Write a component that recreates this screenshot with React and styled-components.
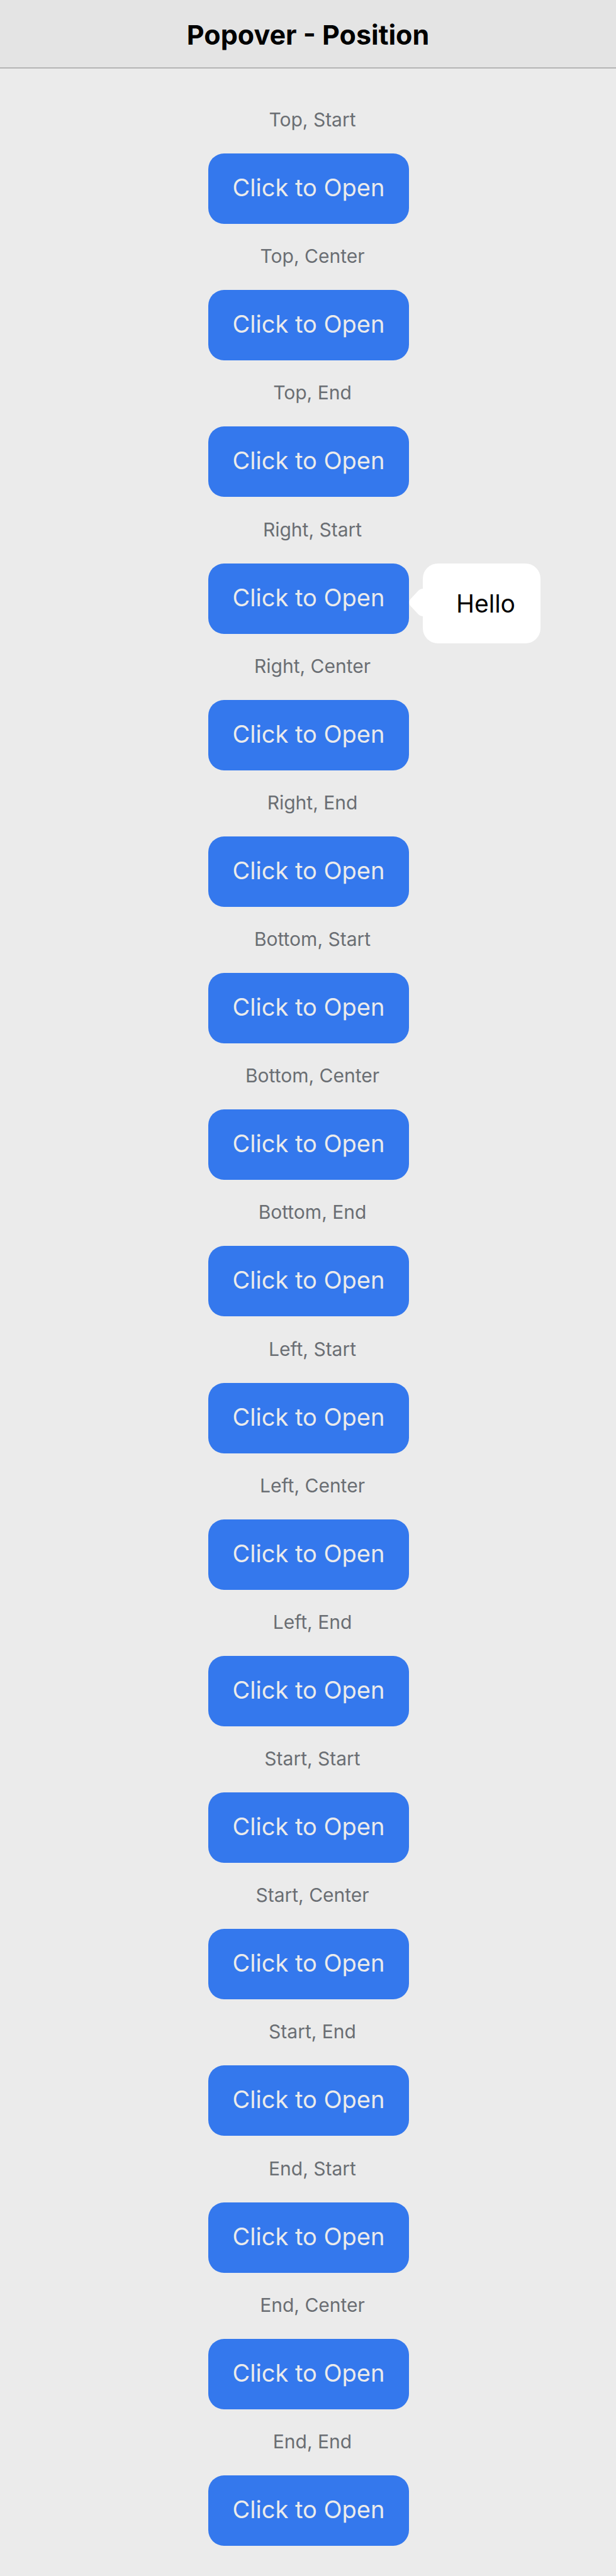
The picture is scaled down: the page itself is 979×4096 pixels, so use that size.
import React from "react";
import styled, { createGlobalStyle } from "styled-components";

const GlobalStyle = createGlobalStyle`
  *, *::before, *::after { box-sizing: border-box; }
  body {
    margin: 0;
    background: #ebebeb;
    font-family: Inter, "Liberation Sans", sans-serif;
  }
`;

const Page = styled.div`
  display: flex;
  flex-direction: column;
  min-height: 100vh;
`;

const Header = styled.header`
  display: flex;
  align-items: center;
  justify-content: center;
  height: 109px;
  padding-top: 2px;
  background: #e4e4e4;
  border-bottom: 2px solid #b5b5b5;
`;

const Title = styled.h1`
  margin: 0;
  font-size: 43px;
  line-height: 48px;
  font-weight: 700;
  color: #000;
`;

const Content = styled.main`
  flex: 1;
  display: flex;
  flex-direction: column;
  align-items: center;
  justify-content: space-between;
  padding: 62px 0 48px 2px;
`;

const Example = styled.section`
  display: flex;
  flex-direction: column;
  align-items: center;
  gap: 35px;
`;

const Label = styled.h2`
  margin: 0;
  padding-left: 12px;
  font-size: 30px;
  line-height: 38px;
  font-weight: 400;
  color: #6a6e73;
`;

const Anchor = styled.div`
  position: relative;
`;

const OpenButton = styled.button`
  display: block;
  width: 319px;
  height: 112px;
  padding: 0 0 4px;
  border: 0;
  border-radius: 25px;
  background: #3478ed;
  color: #ebebeb;
  font-family: inherit;
  font-size: 38px;
  font-weight: 400;
  white-space: nowrap;
  cursor: pointer;
`;

const PopoverBox = styled.div`
  position: absolute;
  top: 0;
  left: calc(100% + 22px);
  padding: 40px 40px 40px 53px;
  border-radius: 24px;
  background: #fff;
  color: #000;
  font-size: 39px;
  line-height: 47px;
`;

const Arrow = styled.svg`
  position: absolute;
  top: 40px;
  right: 100%;
  width: 22px;
  height: 44px;
  fill: #fff;
`;

function Popover({ children }) {
  return (
    <PopoverBox role="dialog">
      <Arrow viewBox="0 0 22 44" aria-hidden="true">
        <path d="M22 0Q18 0 15 3L2 17Q-1 22 2 27L15 41Q18 44 22 44Z" />
      </Arrow>
      {children}
    </PopoverBox>
  );
}

const sides = ["Top", "Right", "Bottom", "Left", "Start", "End"];
const alignments = ["Start", "Center", "End"];
const positions = sides.flatMap((side) =>
  alignments.map((alignment) => `${side}, ${alignment}`)
);

export default function App() {
  const [open, setOpen] = React.useState("Right, Start");

  return (
    <Page>
      <GlobalStyle />
      <Header>
        <Title>Popover - Position</Title>
      </Header>
      <Content>
        {positions.map((position) => (
          <Example key={position}>
            <Label>{position}</Label>
            <Anchor>
              <OpenButton
                type="button"
                aria-expanded={open === position}
                onClick={() => setOpen(open === position ? null : position)}
              >
                Click to Open
              </OpenButton>
              {open === position && <Popover>Hello</Popover>}
            </Anchor>
          </Example>
        ))}
      </Content>
    </Page>
  );
}
